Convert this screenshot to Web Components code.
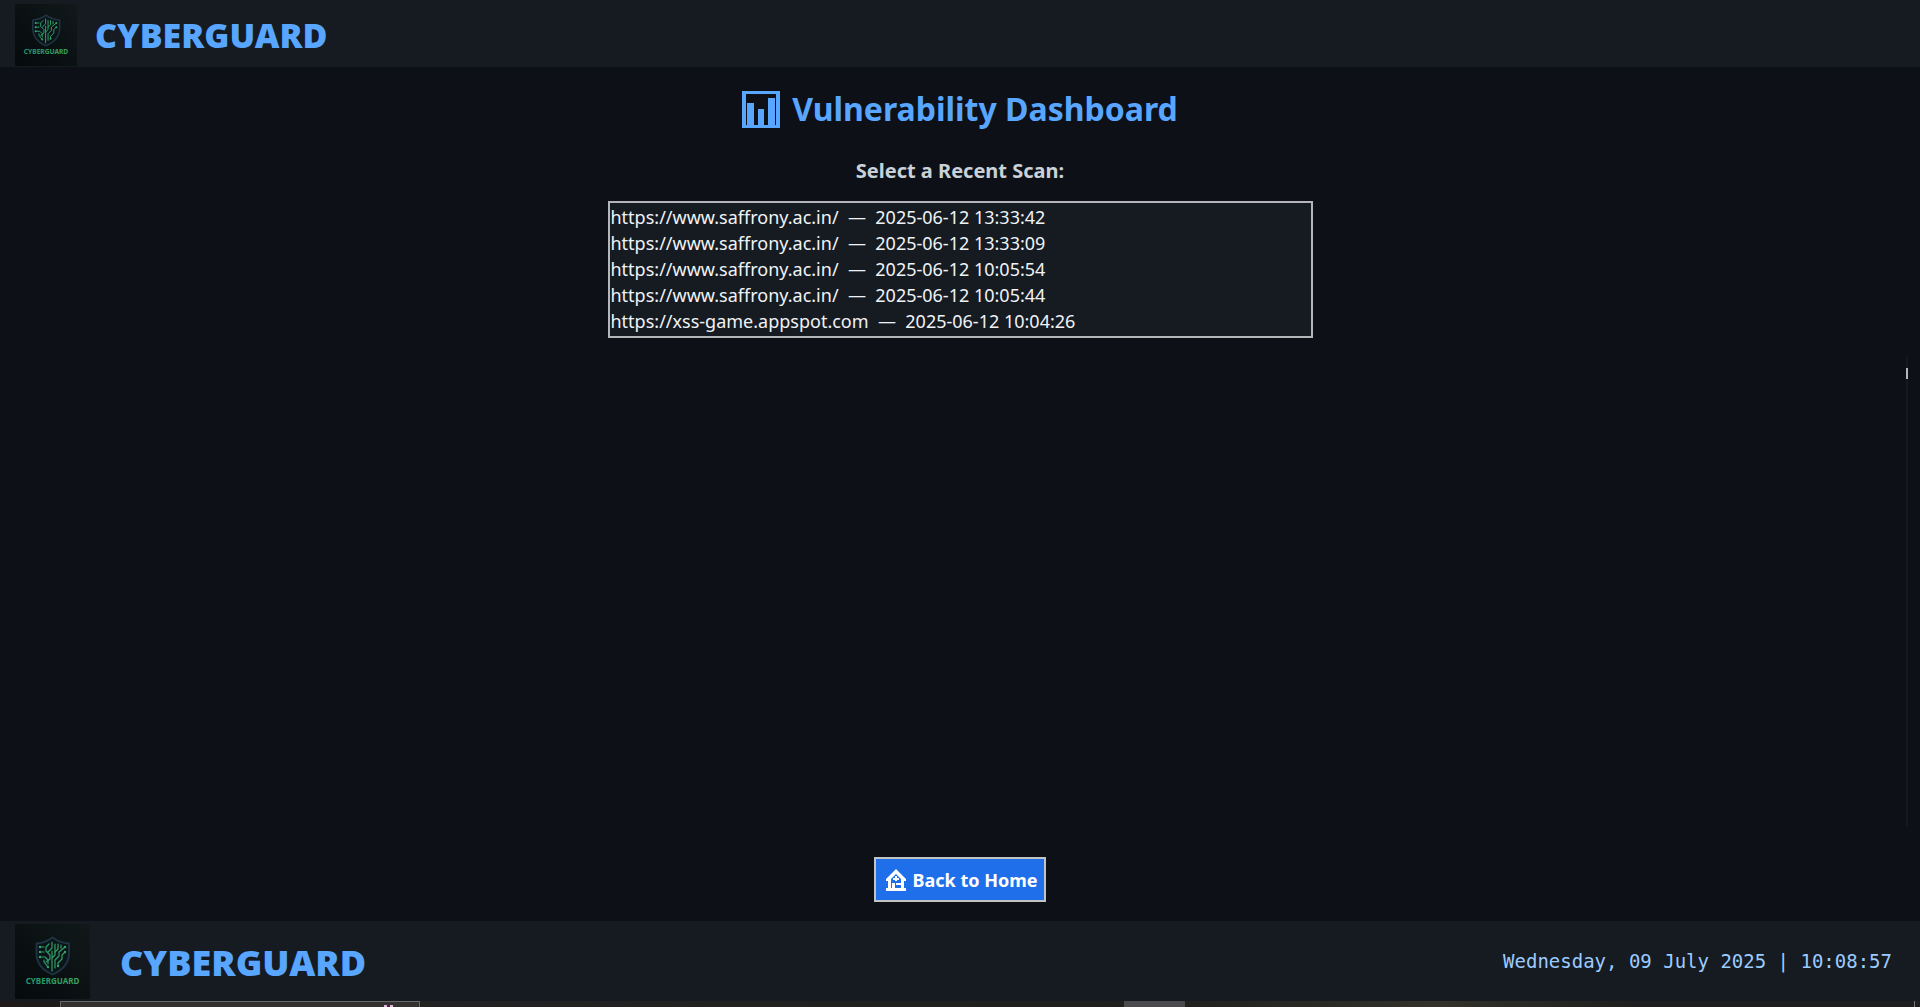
<!DOCTYPE html>
<html lang="en">
<meta charset="utf-8" />
<title>CYBERGUARD</title>

<style>
	body {
		margin: 0;
		background: #0d1117;
		color: #c9d1d9;
		font-family: "Noto Sans", "Open Sans", sans-serif;
	}
</style>

<cg-app></cg-app>

<script>
	function shadow(elem, html) {
		const t = document.createElement("template")
		t.innerHTML = html
		const root = elem.attachShadow({ mode: "open" })
		root.append(t.content.cloneNode(true))
		return root
	}

	const scans = [
		{ url: "https://www.saffrony.ac.in/", time: "2025-06-12 13:33:42" },
		{ url: "https://www.saffrony.ac.in/", time: "2025-06-12 13:33:09" },
		{ url: "https://www.saffrony.ac.in/", time: "2025-06-12 10:05:54" },
		{ url: "https://www.saffrony.ac.in/", time: "2025-06-12 10:05:44" },
		{ url: "https://xss-game.appspot.com", time: "2025-06-12 10:04:26" },
	]

	class CgLogo extends HTMLElement {
		constructor() {
			super()
			shadow(this, `
				<style>
					:host {
						display: block;
						flex: none;
						width: var(--logo-size, 62px);
						height: var(--logo-size, 62px);
					}
					svg {
						display: block;
						width: 100%;
						height: 100%;
					}
				</style>
				<svg viewBox="0 0 75 75" aria-hidden="true">
					<defs>
						<linearGradient id="bg" x1="0" y1="1" x2="1" y2="0">
							<stop offset="0" stop-color="#050a0b" />
							<stop offset="1" stop-color="#11191b" />
						</linearGradient>
						<linearGradient id="green" gradientUnits="userSpaceOnUse" x1="10" y1="0" x2="65" y2="0">
							<stop offset="0" stop-color="#1c9a70" />
							<stop offset="1" stop-color="#3fa05a" />
						</linearGradient>
					</defs>
					<rect width="75" height="75" fill="url(#bg)" />
					<path d="M37.500 13.500C33 17 27 19 21.500 19.500V29C21.500 39 28 46.500 37.500 50.500C47 46.500 54 39 54 29V19.500C48 19 42 17 37.500 13.500Z" fill="#0b1519" stroke="#203443" stroke-width="1.800" />
					<g fill="none" stroke="url(#green)" stroke-width="1.200" stroke-linecap="round" stroke-linejoin="round">
						<path d="M25 23H29M25 28H29M25 33H30L33 36V40" />
						<path d="M37 18V24L33 28M34 20L31 23V27L35 31V35L31 38" />
						<path d="M37 27V47M40 20V31L37 34M40 44V36L44 32V28L50 23" />
						<path d="M43 20V25L40 28M46 21V24M50 28L47 31V35L43 39V42M29 36V38L33 43" />
					</g>
					<g fill="#33a568">
						<circle cx="25" cy="23" r="1.200" />
						<circle cx="25" cy="28" r="1.200" />
						<circle cx="25" cy="33" r="1.200" />
						<circle cx="50" cy="28" r="1.200" />
						<circle cx="43" cy="42" r="1.200" />
						<circle cx="50" cy="23" r="1.200" />
						<circle cx="33" cy="43" r="1.200" />
					</g>
					<text x="37.500" y="60" text-anchor="middle" font-family="Noto Sans, sans-serif" font-size="8" font-weight="700" fill="url(#green)">CYBERGUARD</text>
				</svg>
			`)
		}
	}
	customElements.define("cg-logo", CgLogo)

	class CgHeader extends HTMLElement {
		constructor() {
			super()
			shadow(this, `
				<style>
					:host {
						display: block;
						background: #161b22;
					}
					header {
						display: flex;
						align-items: center;
						gap: 18px;
						height: 67px;
						padding: 2px 15px 0;
						box-sizing: border-box;
					}
					.brand {
						color: #58a6ff;
						font-size: 34px;
						line-height: 40px;
						font-weight: 900;
					}
				</style>
				<header>
					<cg-logo></cg-logo>
					<div class="brand"><slot></slot></div>
				</header>
			`)
		}
	}
	customElements.define("cg-header", CgHeader)

	class CgFooter extends HTMLElement {
		constructor() {
			super()
			shadow(this, `
				<style>
					:host {
						display: block;
						background: #161b22;
						--logo-size: 75px;
					}
					footer {
						display: flex;
						align-items: center;
						height: 80px;
						padding: 0 28px 0 15px;
					}
					.brand {
						margin: 4px auto 0 30px;
						color: #58a6ff;
						font-size: 36px;
						line-height: 40px;
						font-weight: 900;
					}
					.clock {
						color: #9ccbff;
						font: 19px/24px "DejaVu Sans Mono", monospace;
					}
				</style>
				<footer>
					<cg-logo></cg-logo>
					<div class="brand"><slot></slot></div>
					<div class="clock"><slot name="clock"></slot></div>
				</footer>
			`)
		}
	}
	customElements.define("cg-footer", CgFooter)

	class PageTitle extends HTMLElement {
		constructor() {
			super()
			shadow(this, `
				<style>
					:host {
						display: block;
						color: #58a6ff;
					}
					h1 {
						display: flex;
						justify-content: center;
						align-items: center;
						gap: 12px;
						margin: 0;
						font-size: 32px;
						line-height: 44px;
						font-weight: 700;
					}
					svg {
						width: 38px;
						height: 38px;
					}
				</style>
				<h1>
					<svg viewBox="0 0 38 38" fill="currentColor" aria-hidden="true">
						<path fill-rule="evenodd" d="M0 1H38V38H0ZM4 4V35H34V4Z" />
						<path d="M5 13H12V36H5ZM16 19H22V36H16ZM26 8H33V36H26Z" />
					</svg>
					<span><slot></slot></span>
				</h1>
			`)
		}
	}
	customElements.define("page-title", PageTitle)

	class ScanList extends HTMLElement {
		constructor() {
			super()
			const root = shadow(this, `
				<style>
					:host {
						display: flex;
						flex-flow: column;
						align-items: center;
						gap: 16px;
					}
					label {
						font-size: 20px;
						line-height: 28px;
						font-weight: 700;
					}
					select {
						box-sizing: border-box;
						width: 705px;
						max-width: 100%;
						height: 137px;
						margin: 0;
						padding: 2px 0 1px;
						overflow: hidden;
						background: #161b22;
						color: #f0f3f6;
						border: 2px solid #b4b6ba;
						border-radius: 0;
						outline: none;
						font: 18px/26px "Noto Sans", sans-serif;
					}
					option {
						min-height: 26px;
						padding: 0 1px;
						line-height: 26px;
					}
				</style>
				<label for="scans"><slot></slot></label>
				<select id="scans" size="5"></select>
			`)
			this.select = root.querySelector("select")
		}
		set items(items) {
			const elems = items.map(item => {
				return new Option(`${item.url}\u00a0 — \u00a0${item.time}`)
			})
			this.select.replaceChildren(...elems)
		}
	}
	customElements.define("scan-list", ScanList)

	class ResultPane extends HTMLElement {
		constructor() {
			super()
			shadow(this, `
				<style>
					:host {
						display: flex;
						justify-content: flex-end;
						padding-right: 12px;
					}
					.track {
						width: 2px;
						padding-top: 12px;
						background: #14181f;
					}
					.thumb {
						height: 11px;
						background: #b4b6ba;
					}
				</style>
				<div class="track"><div class="thumb"></div></div>
			`)
		}
	}
	customElements.define("result-pane", ResultPane)

	class HomeButton extends HTMLElement {
		constructor() {
			super()
			shadow(this, `
				<style>
					:host {
						display: block;
					}
					button {
						display: flex;
						align-items: center;
						gap: 7px;
						height: 45px;
						padding: 0 7px 0 10px;
						background: #1f6feb;
						color: #fff;
						border: 2px solid #c2c3c5;
						border-radius: 0;
						font: 700 18px/26px "Noto Sans", sans-serif;
					}
					svg {
						width: 20px;
						height: 22px;
					}
				</style>
				<button type="button">
					<svg viewBox="0 0 20 22" aria-hidden="true">
						<path fill="#fff" fill-rule="evenodd" d="M10 0L20 10V12H18V19H20V22H0V19H2V12H0V10ZM10 5L5 10V19H6V14H9V19H15V10Z" />
						<path fill="none" stroke="#fff" stroke-width="2" d="M10 7V12M7 10H13M10 15H16" />
					</svg>
					<slot></slot>
				</button>
			`)
		}
	}
	customElements.define("home-button", HomeButton)

	// sliver of the desktop below the app window
	class DesktopEdge extends HTMLElement {
		constructor() {
			super()
			shadow(this, `
				<style>
					:host {
						display: grid;
						grid-template-columns: 60fr 360fr 704fr 61fr 729fr 6fr;
						height: 6px;
						overflow: hidden;
						background: linear-gradient(90deg, #1e1a1a, #222 25%, #1e1e1d 60%, #32312a 75%, #1e1e1e 85%);
					}
					.preview {
						grid-column: 2;
						display: flex;
						justify-content: flex-end;
						gap: 3px;
						box-sizing: border-box;
						padding: 3px 26px 0 0;
						background: #343131;
						border: 1px solid #68686a;
						border-bottom: none;
					}
					.preview i {
						width: 3px;
						height: 2px;
						background: #e6b4dc;
					}
					.tab {
						grid-column: 4;
						background: #4b4a4c;
					}
					.peek {
						grid-column: 6;
						border-left: 1px solid #777;
					}
				</style>
				<div class="preview"><i></i><i></i></div>
				<div class="tab"></div>
				<div class="peek"></div>
			`)
		}
	}
	customElements.define("desktop-edge", DesktopEdge)

	class CgApp extends HTMLElement {
		constructor() {
			super()
			const root = shadow(this, `
				<style>
					:host {
						display: flex;
						flex-flow: column;
						min-height: 100vh;
					}
					main {
						flex: 1;
						display: flex;
						flex-flow: column;
						padding: 20px 0 19px;
					}
					scan-list {
						margin: 26px 0 18px;
					}
					result-pane {
						flex: 1;
					}
					home-button {
						align-self: center;
						margin-top: 31px;
					}
				</style>
				<cg-header>CYBERGUARD</cg-header>
				<main>
					<page-title>Vulnerability Dashboard</page-title>
					<scan-list>Select a Recent Scan:</scan-list>
					<result-pane></result-pane>
					<home-button>Back to Home</home-button>
				</main>
				<cg-footer>
					CYBERGUARD
					<time slot="clock" datetime="2025-07-09T10:08:57">Wednesday, 09 July 2025 | 10:08:57</time>
				</cg-footer>
				<desktop-edge></desktop-edge>
			`)
			root.querySelector("scan-list").items = scans
		}
	}
	customElements.define("cg-app", CgApp)
</script>
</html>
